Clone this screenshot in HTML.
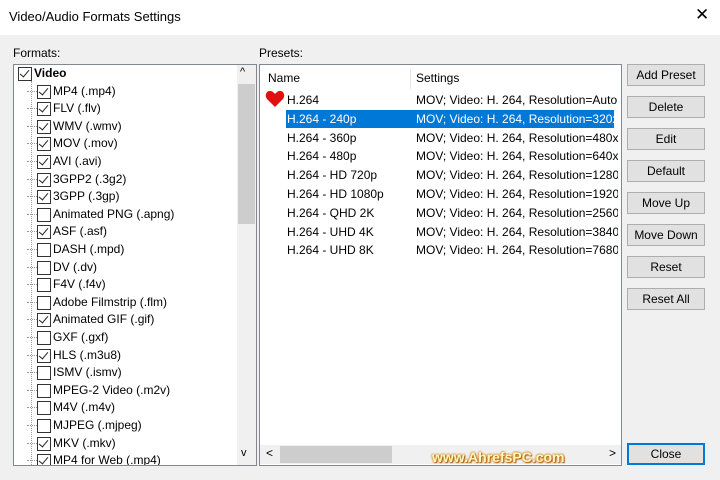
<!DOCTYPE html><html><head><style>
body{margin:0;width:720px;height:480px;background:#f0f0f0;font-family:"Liberation Sans",sans-serif;font-size:12px;color:#000;position:relative;overflow:hidden}
.a{position:absolute}
.title{left:0;top:0;width:720px;height:35px;background:#fff}
.lb{background:#fff;border:1px solid #828790;box-sizing:border-box}
.it{position:absolute;left:38px;height:17px;line-height:17px;white-space:nowrap}
.cb{position:absolute;left:-1px;top:2px;width:12px;height:12px;border:1px solid #333;background:#fff}
.cb.c::after{content:"";position:absolute;left:3px;top:0px;width:4px;height:8px;border-right:1.5px solid #222;border-bottom:1.5px solid #222;transform:rotate(40deg)}
.it span{position:absolute;left:15px}
.dot{position:absolute;left:-11px;top:8px;width:10px;border-top:1px dotted #999}
.btn{position:absolute;left:627px;width:78px;height:22px;background:#e1e1e1;border:1px solid #adadad;box-sizing:border-box;text-align:center;line-height:20px}
.row{position:absolute;left:287px;height:18px;line-height:18px;white-space:nowrap}
.set{position:absolute;left:416px;height:18px;line-height:18px;white-space:nowrap;width:202px;overflow:hidden}
#clip{position:absolute;left:14px;top:65px;width:222px;height:400px;overflow:hidden}
</style></head><body>
<div class="a title"></div>
<div class="a" style="left:9px;top:9px;font-size:13px">Video/Audio Formats Settings</div>
<div class="a" style="left:695px;top:5px;font-size:17px">✕</div>
<div class="a" style="left:13px;top:46px">Formats:</div>
<div class="a" style="left:259px;top:46px">Presets:</div>
<div class="a lb" style="left:13px;top:64px;width:244px;height:402px;overflow:hidden">
<div class="a" style="left:223px;top:0;width:19px;height:400px;background:#f0f0f0"></div>
<div class="a" style="left:224px;top:19px;width:17px;height:140px;background:#cdcdcd"></div>
<div class="a" style="left:226px;top:1px;font-size:11px">&#94;</div>
<div class="a" style="left:227px;top:382px;font-size:11px">v</div>
<div class="a" style="left:17px;top:16px;height:384px;border-left:1px dotted #999"></div>
</div>
<div id="clip"><div id="fl" style="position:absolute;left:-14px;top:-65px"></div></div>
<div class="a lb" style="left:259px;top:64px;width:363px;height:402px">
<div class="a" style="left:150px;top:4px;height:20px;border-left:1px solid #e5e5e5"></div>
<div class="a" style="left:8px;top:6px">Name</div>
<div class="a" style="left:156px;top:6px">Settings</div>
<div class="a" style="left:0;top:380px;width:361px;height:19px;background:#f0f0f0"></div>
<div class="a" style="left:20px;top:381px;width:112px;height:17px;background:#cdcdcd"></div>
<div class="a" style="left:6px;top:381px">&lt;</div>
<div class="a" style="left:349px;top:381px">&gt;</div>
</div>
<div class="a" style="left:286px;top:110px;width:328px;height:18px;background:#0078d7"></div>
<svg class="a" style="left:265px;top:90px" width="20" height="18" viewBox="0 0 20 18"><path d="M10 17 L2 9 C-1 5 2 0 6 1 C8 1.5 9 3 10 4 C11 3 12 1.5 14 1 C18 0 21 5 18 9 Z" fill="#e01010"/></svg>
<div id="pl"></div>
<div class="btn" style="top:64px">Add Preset</div>
<div class="btn" style="top:96px">Delete</div>
<div class="btn" style="top:128px">Edit</div>
<div class="btn" style="top:160px">Default</div>
<div class="btn" style="top:192px">Move Up</div>
<div class="btn" style="top:224px">Move Down</div>
<div class="btn" style="top:256px">Reset</div>
<div class="btn" style="top:288px">Reset All</div>
<div class="btn" style="top:443px;border:2px solid #0078d7;line-height:18px">Close</div>
<div class="a" style="left:432px;top:449px;font-weight:bold;font-size:14px;color:#fff8c0;text-shadow:0 0 2px #c87000,0 0 2px #c87000,1px 1px 1px #a05000">www.AhrefsPC.com</div>
<script>
var f=[["Video",1],["MP4 (.mp4)",1],["FLV (.flv)",1],["WMV (.wmv)",1],["MOV (.mov)",1],["AVI (.avi)",1],["3GPP2 (.3g2)",1],["3GPP (.3gp)",1],["Animated PNG (.apng)",0],["ASF (.asf)",1],["DASH (.mpd)",0],["DV (.dv)",0],["F4V (.f4v)",0],["Adobe Filmstrip (.flm)",0],["Animated GIF (.gif)",1],["GXF (.gxf)",0],["HLS (.m3u8)",1],["ISMV (.ismv)",0],["MPEG-2 Video (.m2v)",0],["M4V (.m4v)",0],["MJPEG (.mjpeg)",0],["MKV (.mkv)",1],["MP4 for Web (.mp4)",1]];
var h="";f.forEach(function(x,i){var y=65+i*17.6;var l=i==0?19:38;h+='<div class="it" style="left:'+l+'px;top:'+y+'px">'+(i?'<div class="dot"></div>':'')+'<div class="cb'+(x[1]?' c':'')+'"></div><span'+(i==0?' style="font-weight:bold"':'')+'>'+x[0]+'</span></div>';});
document.getElementById("fl").innerHTML=h;
var p=[["H.264","Auto, F"],["H.264 - 240p","320x24"],["H.264 - 360p","480x36"],["H.264 - 480p","640x48"],["H.264 - HD 720p","1280x7"],["H.264 - HD 1080p","1920x1"],["H.264 - QHD 2K","2560x1"],["H.264 - UHD 4K","3840x2"],["H.264 - UHD 8K","7680x4"]];
h="";p.forEach(function(x,i){var y=91+i*18.8;var c=i==1?"color:#fff;":"";h+='<div class="row" style="'+c+'top:'+y+'px">'+x[0]+'</div><div class="set" style="'+c+'top:'+y+'px">MOV; Video: H. 264, Resolution='+x[1]+'</div>';});
document.getElementById("pl").innerHTML=h;
</script>
</body></html>
